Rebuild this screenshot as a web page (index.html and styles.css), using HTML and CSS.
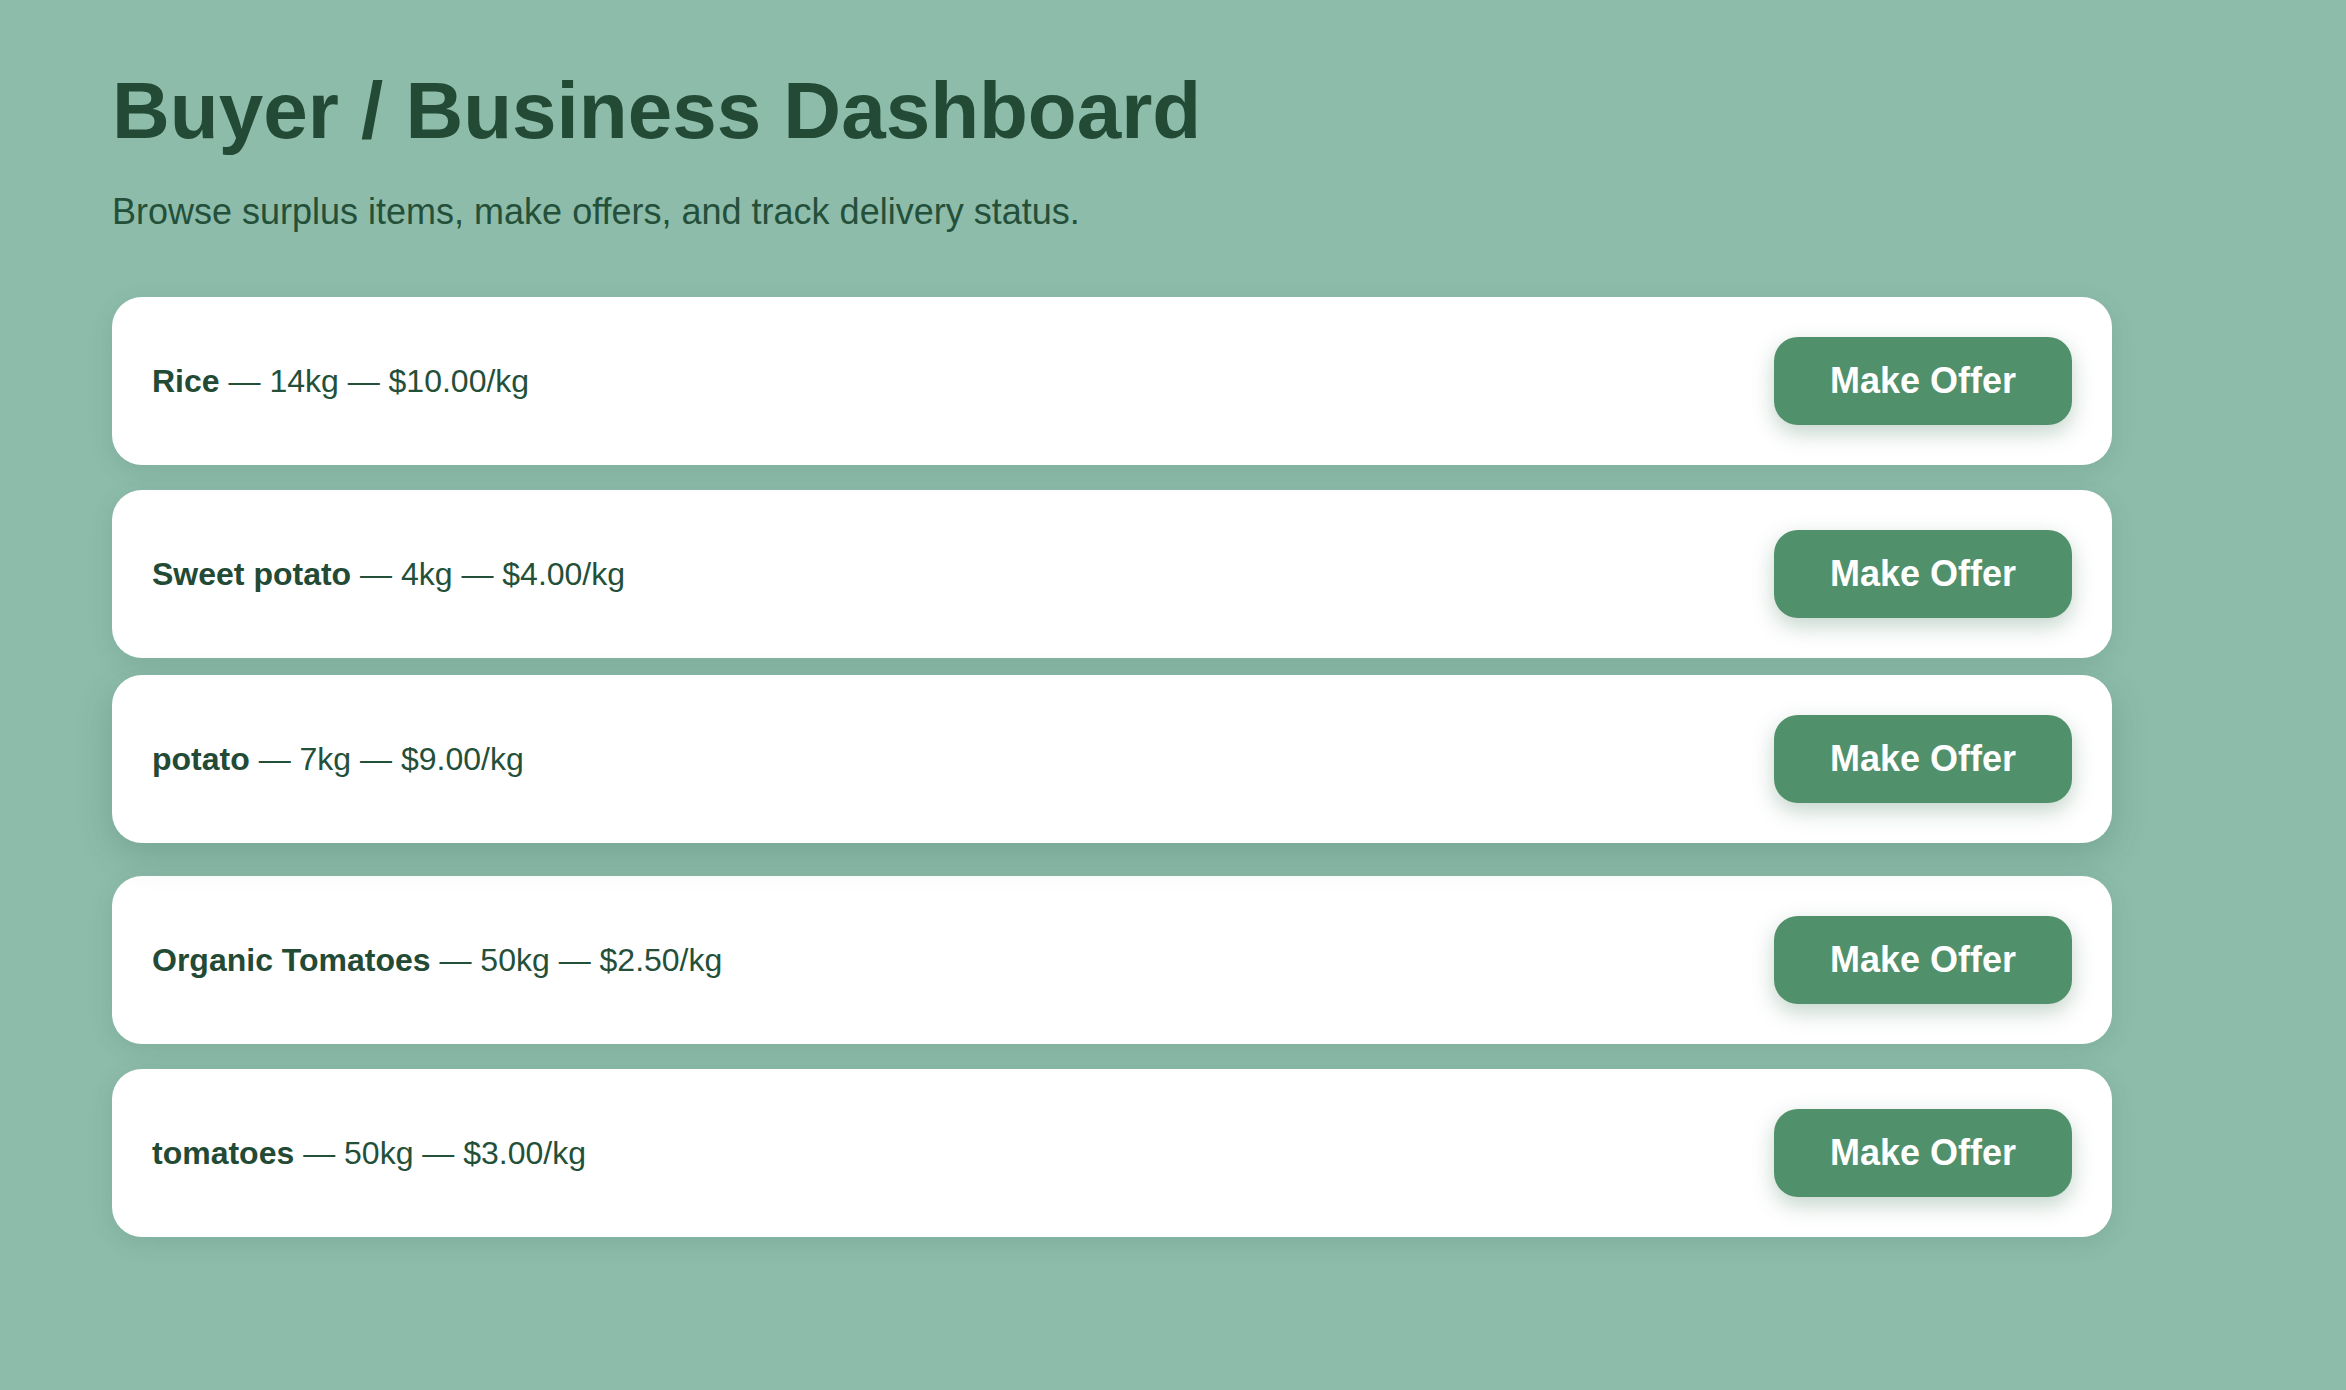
FILE: index.html
```html
<!DOCTYPE html>
<html lang="en">
<head>
<meta charset="utf-8">
<title>Buyer / Business Dashboard</title>
<link rel="stylesheet" href="styles.css">
</head>
<body>
<main class="page">
  <h1 class="title">Buyer / Business Dashboard</h1>
  <p class="subtitle">Browse surplus items, make offers, and track delivery status.</p>
  <ul class="listings">
    <li class="card">
      <span class="item"><strong>Rice</strong> — 14kg — $10.00/kg</span>
      <button class="offer-btn" type="button">Make Offer</button>
    </li>
    <li class="card">
      <span class="item"><strong>Sweet potato</strong> — 4kg — $4.00/kg</span>
      <button class="offer-btn" type="button">Make Offer</button>
    </li>
    <li class="card card--hover">
      <span class="item"><strong>potato</strong> — 7kg — $9.00/kg</span>
      <button class="offer-btn" type="button">Make Offer</button>
    </li>
    <li class="card">
      <span class="item"><strong>Organic Tomatoes</strong> — 50kg — $2.50/kg</span>
      <button class="offer-btn" type="button">Make Offer</button>
    </li>
    <li class="card">
      <span class="item"><strong>tomatoes</strong> — 50kg — $3.00/kg</span>
      <button class="offer-btn" type="button">Make Offer</button>
    </li>
  </ul>
</main>
</body>
</html>
```

FILE: styles.css
```css
*, *::before, *::after {
  box-sizing: border-box;
}

html, body {
  margin: 0;
  padding: 0;
}

body {
  background: #8dbcab;
  font-family: "Liberation Sans", Arial, Helvetica, sans-serif;
  color: #24503a;
  min-height: 1390px;
}

.page {
  padding: 65px 0 0 112px;
  width: 2112px;
}

.title {
  margin: 0;
  font-size: 80px;
  line-height: 92px;
  font-weight: 700;
  color: #234a34;
}

.subtitle {
  margin: 34px 0 0;
  font-size: 36px;
  line-height: 41px;
  color: #24503a;
}

.listings {
  list-style: none;
  margin: 65px 0 0;
  padding: 0;
  display: flex;
  flex-direction: column;
  gap: 25px;
}

.card {
  display: flex;
  align-items: center;
  justify-content: space-between;
  height: 168px;
  background: #ffffff;
  border-radius: 30px;
  padding: 0 40px;
  box-shadow: 0 6px 24px rgba(30, 70, 50, 0.12);
}

.card--hover {
  transform: translateY(-8px);
  box-shadow: 0 12px 36px rgba(30, 70, 50, 0.2);
}

.item {
  font-size: 32px;
  line-height: 40px;
  color: #24503a;
  white-space: nowrap;
}

.item strong {
  font-weight: 700;
  color: #234a34;
}

.offer-btn {
  flex: none;
  font-family: "Liberation Sans", Arial, Helvetica, sans-serif;
  font-size: 36px;
  line-height: 40px;
  font-weight: 700;
  color: #ffffff;
  background: #50906a;
  border: none;
  border-radius: 24px;
  width: 298px;
  height: 88px;
  padding: 0;
  white-space: nowrap;
  text-align: center;
  box-shadow: 0 8px 22px rgba(40, 100, 65, 0.28);
  cursor: pointer;
}
```
